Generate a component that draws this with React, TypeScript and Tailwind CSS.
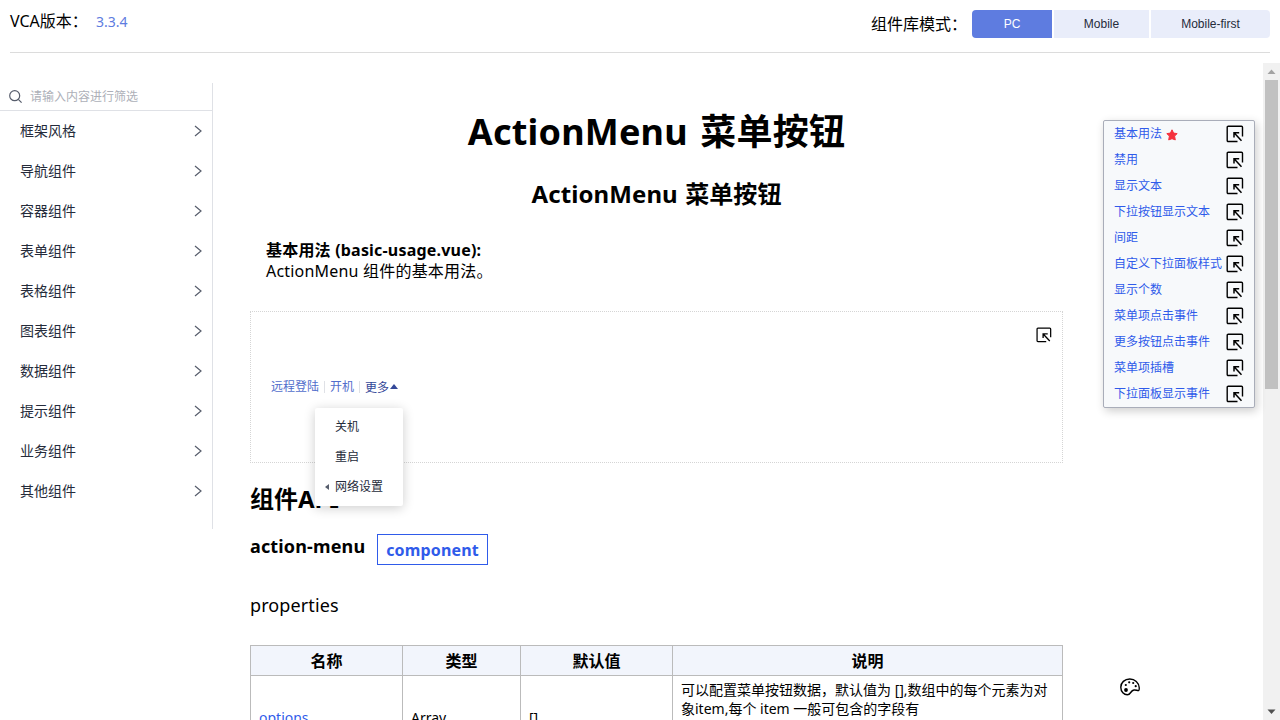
import React from 'react';

const categories = [
  '框架风格', '导航组件', '容器组件', '表单组件', '表格组件',
  '图表组件', '数据组件', '提示组件', '业务组件', '其他组件',
];

const anchors = [
  '基本用法', '禁用', '显示文本', '下拉按钮显示文本', '间距', '自定义下拉面板样式',
  '显示个数', '菜单项点击事件', '更多按钮点击事件', '菜单项插槽', '下拉面板显示事件',
];

function JumpIcon({ className }: { className: string }) {
  return (
    <svg viewBox="0 0 18 18" className={className} fill="none" stroke="#000">
      <path d="M11.500 16.500H2.200a1 1 0 0 1-1-1V2.200a1 1 0 0 1 1-1h13.300a1 1 0 0 1 1 1V11.500" strokeWidth="1.400" />
      <path d="M8 12.500V7.800H13.200M8.300 8.100l7.200 7.700" strokeWidth="1.500" />
    </svg>
  );
}

function PaletteIcon() {
  return (
    <svg viewBox="0 0 20 18" className="h-[18px] w-5" fill="none" stroke="#000">
      <path
        d="M9.8 1C4.6 1 .8 4.600.8 9.200c0 4.700 3.300 7.600 6.500 7.600 3.700 0 3-4.300 6.700-4.800 2.100-.300 3.200.800 4.700.500.700-.200.600-1.700.500-3C18.800 4.700 15 1 9.800 1Z"
        strokeWidth="1.400"
      />
      <g fill="#000" stroke="none">
        <circle cx="6" cy="12" r="1.900" />
        <circle cx="5.800" cy="7" r="1.100" />
        <circle cx="9.200" cy="4.300" r="1.100" />
        <circle cx="13.200" cy="5" r="1.100" />
        <circle cx="15.700" cy="8.200" r="1.100" />
      </g>
    </svg>
  );
}

function Header() {
  return (
    <header className="mx-[10px] flex h-[53px] shrink-0 justify-between border-b border-[#dcdcdc]">
      <div className="flex text-base">
        <span className="mt-[9px] h-6 w-[86px] whitespace-nowrap leading-6">VCA版本：</span>
        <span className="mt-[10px] h-6 text-sm leading-6 text-[#5e7ce0]">3.3.4</span>
      </div>
      <div className="flex pt-[10px]">
        <span className="mt-[2px] w-[101px] whitespace-nowrap text-base leading-6">组件库模式：</span>
        <div className="flex h-7 gap-[2px] font-['Liberation_Sans',sans-serif] text-xs leading-7 text-[#252b3a]">
          <button className="w-20 rounded-l-sm bg-[#5e7ce0] text-white">PC</button>
          <button className="w-[95px] bg-[#e9edfa]">Mobile</button>
          <button className="w-[119px] rounded-r-sm bg-[#e9edfa]">Mobile-first</button>
        </div>
      </div>
    </header>
  );
}

function Sidebar() {
  return (
    <aside className="mt-5 h-[446px] w-[213px] shrink-0 border-r border-[#dfe1e6]">
      <div className="flex h-7 items-center border-b border-[#dfe1e6] pl-[9px] text-xs text-[#adb0b8]">
        <svg viewBox="0 0 13 13" className="mr-2 size-[13px] shrink-0" fill="none" stroke="#575d6c" strokeWidth="1.200">
          <circle cx="5.700" cy="5.700" r="5" />
          <path d="m9.300 9.300 3.300 3.300" />
        </svg>
        请输入内容进行筛选
      </div>
      <ul>
        {categories.map((name) => (
          <li key={name} className="flex h-10 items-center justify-between pl-5 pr-[10px] text-sm text-[#252b3a]">
            {name}
            <svg viewBox="0 0 8 12" className="h-3 w-2" fill="none" stroke="#575d6c" strokeWidth="1.200">
              <path d="m1 1 6 5-6 5" />
            </svg>
          </li>
        ))}
      </ul>
    </aside>
  );
}

function DropdownMenu() {
  return (
    <ul className="absolute left-[64px] top-[96px] z-10 h-[98px] w-[88px] rounded-[2px] bg-white pt-1 text-xs text-[#252b3a] shadow-[0_2px_12px_rgba(0,0,0,0.2)]">
      <li className="flex h-[30px] items-center pl-5">关机</li>
      <li className="flex h-[30px] items-center pl-5">重启</li>
      <li className="flex h-[30px] items-center pl-[10px]">
        <svg viewBox="0 0 4 6" className="mr-[6px] h-[6px] w-1" fill="#575d6c">
          <path d="M4 0v6L0 3z" />
        </svg>
        网络设置
      </li>
    </ul>
  );
}

function Demo() {
  return (
    <section className="relative mt-[29px] h-[152px] border border-dotted border-[#d5d5d5]">
      <div className="flex justify-end pr-[10px] pt-[15px]">
        <JumpIcon className="size-4" />
      </div>
      <div className="mt-[34px] flex h-5 items-center pl-5 text-xs text-[#526ecc]">
        <span>远程登陆</span>
        <span className="ml-[5px] mr-[5px] h-3 w-px bg-[#dfe1e6]" />
        <span>开机</span>
        <span className="ml-[5px] mr-[5px] h-3 w-px bg-[#dfe1e6]" />
        <span className="mt-px text-[#344899]">更多</span>
        <svg viewBox="0 0 8 5" className="-mt-px ml-px h-[5px] w-2" fill="#344899">
          <path d="M4 0 8 5H0z" />
        </svg>
      </div>
      <DropdownMenu />
    </section>
  );
}

function ApiTable() {
  return (
    <table className="mt-[27px] w-[813px] table-fixed border-collapse text-sm">
      <colgroup>
        <col className="w-[152px]" />
        <col className="w-[118px]" />
        <col className="w-[152px]" />
        <col />
      </colgroup>
      <thead>
        <tr className="h-[30px] bg-[#f2f5fc] text-base leading-6">
          {['名称', '类型', '默认值', '说明'].map((title) => (
            <th key={title} className="border border-[#bbb] p-0 font-bold">{title}</th>
          ))}
        </tr>
      </thead>
      <tbody>
        <tr className="h-[85px]">
          <td className="border border-[#bbb] px-2 py-0 text-[#2f5bea]">options</td>
          <td className="border border-[#bbb] px-2 py-0">Array</td>
          <td className="border border-[#bbb] px-2 py-0">[]</td>
          <td className="border border-[#bbb] px-2 pt-1 align-top leading-[19px]">
            可以配置菜单按钮数据，默认值为 [],数组中的每个元素为对<br />
            象item,每个 item 一般可包含的字段有
          </td>
        </tr>
      </tbody>
    </table>
  );
}

function AnchorPanel() {
  return (
    <nav className="absolute left-[1103px] top-[57px] w-[152px] rounded-[2px] border border-[#a9adb9] bg-[#f7f9fb] text-xs text-[#2f5bea] shadow-[2px_3px_10px_rgba(0,0,0,0.2)]">
      {anchors.map((name, i) => (
        <div key={name} className="flex h-[26px] items-center justify-between whitespace-nowrap px-[10px]">
          <span className="flex items-center">
            {name}
            {i === 0 && (
              <svg viewBox="0 0 12 12" className="ml-1 mt-[2px] size-3" fill="#f5313d">
                <path
                  d="m6 .8 1.600 3.300 3.600.500-2.600 2.500.700 3.800L6 9.700l-3.300 1.200.700-3.800L.8 4.600l3.600-.500z"
                  stroke="#f5313d"
                  strokeWidth="1"
                  strokeLinejoin="round"
                />
              </svg>
            )}
          </span>
          <JumpIcon className="size-[18px] shrink-0" />
        </div>
      ))}
    </nav>
  );
}

function Scrollbar() {
  return (
    <div className="flex w-[17px] shrink-0 flex-col items-center bg-[#f1f1f1]">
      <svg viewBox="0 0 17 17" className="size-[17px] shrink-0" fill="#a3a3a3"><path d="m8.500 6.500 4 4.500h-8z" /></svg>
      <div className="h-[309px] w-[13px] bg-[#c1c1c1]" />
      <svg viewBox="0 0 17 17" className="mt-auto size-[17px] shrink-0" fill="#505050"><path d="m8.500 11 4-4.500h-8z" /></svg>
    </div>
  );
}

export default function App() {
  return (
    <div className="flex h-screen flex-col overflow-hidden bg-white font-['Noto_Sans','Noto_Sans_CJK_SC',sans-serif] text-black">
      <Header />
      <div className="relative mt-[10px] flex h-[657px] overflow-hidden">
        <Sidebar />
        <main className="ml-[37px] w-[813px] shrink-0">
          <h1 className="mt-[45px] text-center text-[36px] font-bold leading-[48px] tracking-[0.2px] [word-spacing:3px]">ActionMenu 菜单按钮</h1>
          <h2 className="mt-[22px] text-center text-2xl font-bold leading-8 tracking-[0.1px] [word-spacing:1px]">ActionMenu 菜单按钮</h2>
          <div className="mt-[30px] pl-4 text-base leading-[21px]">
            <p className="font-bold tracking-[0.2px]">基本用法 (basic-usage.vue):</p>
            <p className="tracking-[0.2px]">ActionMenu 组件的基本用法。</p>
          </div>
          <Demo />
          <h2 className="mt-[20px] text-2xl font-bold leading-8">组件API</h2>
          <div className="mt-[18px] flex h-[32px] items-start">
            <h3 className="w-[127px] text-lg font-bold leading-[26px] tracking-[0.15px]">action-menu</h3>
            <span className="mt-px flex h-[31px] w-[111px] items-center justify-center border border-current text-base font-bold tracking-[0.15px] text-[#2f5bea]">component</span>
          </div>
          <h4 className="mt-[27px] text-lg leading-[26px] tracking-[0.1px]">properties</h4>
          <ApiTable />
        </main>
        <div className="flex-1" />
        <Scrollbar />
        <AnchorPanel />
        <div className="absolute left-[1120px] top-[615px]"><PaletteIcon /></div>
      </div>
    </div>
  );
}
